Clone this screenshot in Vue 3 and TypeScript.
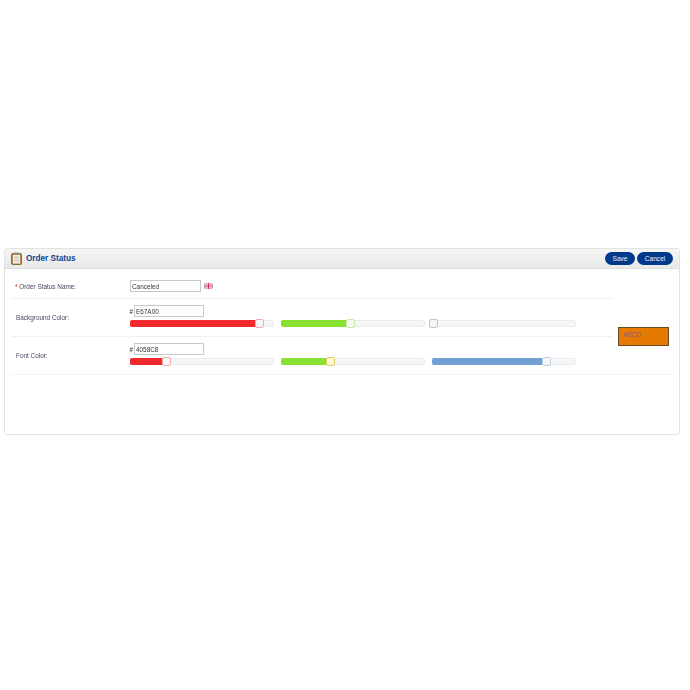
<script setup lang="ts">
interface Slider {
  fill: number;
  knobAt: number;
  color: string;
  knob: string;
  knobBg?: string;
}

interface ColorRow {
  label: string;
  hex: string;
  sliders: Slider[];
}

const rows: ColorRow[] = [
  {
    label: 'Background Color:',
    hex: 'E67A00',
    sliders: [
      { fill: 126, knobAt: 124.5, color: '#f02a2c', knob: '#f5aaaa' },
      { fill: 66, knobAt: 64, color: '#88e030', knob: '#c4eea0' },
      { fill: 0, knobAt: -4, color: '#70a0d4', knob: '#b0c8e8' },
    ],
  },
  {
    label: 'Font Color:',
    hex: '4058C8',
    sliders: [
      { fill: 33, knobAt: 31, color: '#f02a2c', knob: '#f5aaaa' },
      { fill: 46, knobAt: 44.5, color: '#88e030', knob: '#e0cc60', knobBg: '#fdf8d8' },
      { fill: 110, knobAt: 109, color: '#70a0d4', knob: '#b8cfe8' },
    ],
  },
];
</script>

<template>
  <div class="page">
    <section class="panel">
      <header class="panel__head">
        <svg class="panel__icon" width="11" height="13" viewBox="0 0 11 13">
          <rect x="0.5" y="1.5" width="10" height="11" rx="1" fill="#b08a50" stroke="#8d6c3c" />
          <rect x="2" y="3" width="7" height="8.5" fill="#f1efe6" />
          <path d="M3 5h5M3 7h5M3 9h5" stroke="#b9b6a8" stroke-width="0.7" />
          <rect x="3.5" y="0.5" width="4" height="2.5" rx="0.5" fill="#8e8e88" />
        </svg>
        <h1>Order Status</h1>
        <div class="panel__actions">
          <button type="button">Save</button>
          <button type="button">Cancel</button>
        </div>
      </header>

      <div class="panel__body">
        <div class="row row--name">
          <label class="row__label"><span class="req">*</span> Order Status Name:</label>
          <div class="row__value row__value--inline">
            <input class="field field--name" type="text" value="Canceled" />
            <svg class="flag" width="9" height="6" viewBox="0 0 9 6">
              <rect width="9" height="6" fill="#b8a6cc" />
              <path d="M0 0l9 6M9 0L0 6" stroke="#ecd8e4" stroke-width="1" />
              <path d="M4.5 0v6M0 3h9" stroke="#f0e4ea" stroke-width="2" />
              <path d="M4.5 0v6M0 3h9" stroke="#e0305a" stroke-width="1" />
            </svg>
          </div>
        </div>

        <div
          v-for="(row, i) in rows"
          :key="row.label"
          class="row row--color"
          :class="{ 'row--wide': i === rows.length - 1 }"
        >
          <label class="row__label">{{ row.label }}</label>
          <div class="row__value">
            <div class="hex">
              <span>#</span>
              <input class="field" type="text" :value="row.hex" />
            </div>
            <div class="sliders">
              <div v-for="(s, j) in row.sliders" :key="j" class="track">
                <div class="track__fill" :style="{ width: s.fill + 'px', background: s.color }"></div>
                <div
                  class="track__knob"
                  :style="{ left: s.knobAt + 'px', borderColor: s.knob, background: s.knobBg ?? '#f6f6f6' }"
                ></div>
              </div>
            </div>
          </div>
        </div>

        <div class="preview">ABCD</div>
      </div>
    </section>
  </div>
</template>

<style>
html,
body {
  margin: 0;
  background: #fff;
}
</style>

<style scoped>
.page {
  height: 690px;
  padding: 248px 10px 0 4px;
  box-sizing: border-box;
  font-family: "Liberation Sans", Arial, sans-serif;
  font-size: 6.4px;
  color: #4a4460;
}

.panel {
  height: 187px;
  box-sizing: border-box;
  border: 1px solid #e2e2e2;
  border-radius: 3px;
  background: #fff;
  filter: blur(0.3px);
}

.panel__head {
  display: flex;
  align-items: center;
  height: 20px;
  padding: 0 6px;
  box-sizing: border-box;
  background: linear-gradient(#f6f6f6, #e8e8e8);
  border-bottom: 1px solid #e0e0e0;
}

.panel__icon {
  flex: none;
}

.panel__head h1 {
  margin: 0 0 0 4px;
  font-size: 8.2px;
  font-weight: 700;
  color: #0f3f8c;
}

.panel__actions {
  display: flex;
  gap: 2px;
  margin-left: auto;
}

.panel__actions button {
  height: 13px;
  padding: 0;
  border: 0;
  border-radius: 7px;
  background: #003a8c;
  color: #e8eef8;
  font-family: inherit;
  font-size: 6.6px;
}

.panel__actions button:first-child {
  width: 30px;
}

.panel__actions button:last-child {
  width: 36px;
}

.panel__body {
  position: relative;
  padding: 0 5px 0 6px;
}

.row {
  display: flex;
  width: 602px;
  border-bottom: 1px solid #f0f0f0;
  box-sizing: border-box;
}

.row--name {
  height: 30px;
  padding-top: 11px;
}

.row--color {
  height: 38px;
  align-items: flex-start;
  padding-top: 6px;
}

.row--wide {
  width: 100%;
  border-bottom-color: #f2f2f2;
}

.row__label {
  flex: none;
  width: 114px;
  padding-left: 5px;
  box-sizing: border-box;
  line-height: 12px;
}

.row--color .row__label {
  padding-top: 7px;
}

.row--name .row__label {
  padding-top: 1px;
  padding-left: 4px;
}

.req {
  color: #e02020;
}

.row__value {
  flex: 1;
  padding-left: 4.5px;
}

.row__value--inline {
  display: flex;
  align-items: flex-start;
  gap: 3px;
  padding-left: 5px;
}

.flag {
  margin-top: 3px;
}

.field {
  display: block;
  width: 70px;
  height: 12px;
  padding: 0 1px;
  box-sizing: border-box;
  border: 1px solid #c8c8c8;
  border-radius: 0;
  outline: none;
  background: #fff;
  color: #333;
  font-family: inherit;
  font-size: 6.4px;
}

.field--name {
  width: 71px;
}

.hex {
  display: flex;
  align-items: center;
  gap: 1px;
  height: 12px;
  color: #333;
}

.hex span {
  width: 3.5px;
}

.sliders {
  display: flex;
  gap: 6.5px;
  margin-top: 3px;
}

.track {
  position: relative;
  width: 144.5px;
  height: 7px;
  box-sizing: border-box;
  border: 1px solid #ececec;
  border-radius: 2px;
  background: #f6f6f6;
}

.track__fill {
  position: absolute;
  top: -1px;
  left: -1px;
  height: 7px;
  border-radius: 2px 0 0 2px;
}

.track__knob {
  position: absolute;
  top: -2px;
  width: 9px;
  height: 9px;
  box-sizing: border-box;
  border: 1px solid;
  border-radius: 2px;
}

.preview {
  position: absolute;
  top: 58px;
  left: 613px;
  width: 51px;
  height: 19px;
  padding: 2px 0 0 4px;
  box-sizing: border-box;
  border: 1px solid #6a4a20;
  background: #e67a00;
  color: #8a5a8c;
  font-size: 6.4px;
  line-height: 10px;
}
</style>
